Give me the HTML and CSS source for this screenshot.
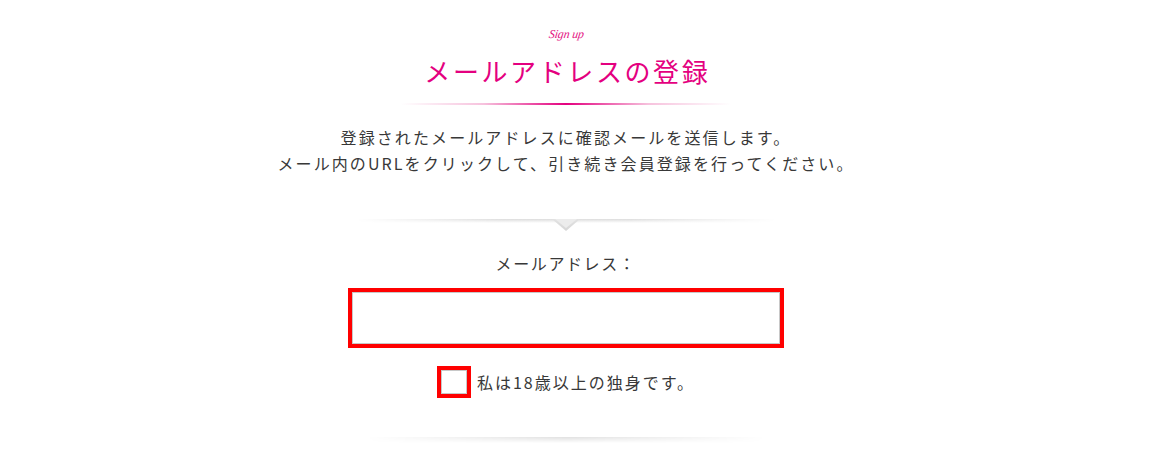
FILE: index.html
```html
<!DOCTYPE html>
<html lang="ja">
<head>
<meta charset="utf-8">
<title>メールアドレスの登録</title>
<link rel="stylesheet" href="styles.css">
</head>
<body>
<div class="page">
  <div class="signup">Sign up</div>
  <h1 class="title">メールアドレスの登録</h1>
  <div class="rule"></div>
  <p class="lead">登録されたメールアドレスに確認メールを送信します。<br>メール内のURLをクリックして、引き続き会員登録を行ってください。</p>
  <svg class="divider" width="420" height="14" viewBox="0 0 420 14">
    <defs>
      <linearGradient id="maskH" x1="0" y1="0" x2="1" y2="0">
        <stop offset="0" stop-color="#000"/>
        <stop offset="0.35" stop-color="#fff"/>
        <stop offset="0.65" stop-color="#fff"/>
        <stop offset="1" stop-color="#000"/>
      </linearGradient>
      <mask id="m">
        <rect x="0" y="0" width="420" height="14" fill="url(#maskH)"/>
      </mask>
      <linearGradient id="shadeV" x1="0" y1="0" x2="0" y2="1">
        <stop offset="0" stop-color="#dcdcdc"/>
        <stop offset="1" stop-color="#ffffff"/>
      </linearGradient>
      <linearGradient id="triV" x1="0" y1="0" x2="0" y2="1">
        <stop offset="0" stop-color="#e2e2e2"/>
        <stop offset="1" stop-color="#d6d6d6"/>
      </linearGradient>
    </defs>
    <g mask="url(#m)">
      <rect x="0" y="1" width="420" height="4" fill="url(#shadeV)"/>
    </g>
    <polygon points="196,1 224,1 210,13" fill="url(#triV)"/>
    <polygon points="199,1 221,1 210,10" fill="#ececec"/>
  </svg>
  <div class="label">メールアドレス：</div>
  <div class="field"><input class="email" type="email" aria-label="メールアドレス"></div>
  <label class="check">
    <span class="box"><span class="box-inner"></span></span>
    <span class="check-text">私は18歳以上の独身です。</span>
  </label>
  <div class="bottom-shadow"></div>
</div>
</body>
</html>
```

FILE: styles.css
```css
html, body {
  margin: 0;
  padding: 0;
  background: #fff;
}
body {
  font-family: "Noto Sans CJK JP", "Noto Sans", sans-serif;
  color: #383838;
}
.page {
  width: 1132px;
  display: flex;
  flex-direction: column;
  align-items: center;
}
.signup {
  margin-top: 27px;
  font-family: "Liberation Serif", "DejaVu Serif", serif;
  font-style: italic;
  font-size: 12px;
  line-height: 14px;
  color: #e4117f;
  letter-spacing: -0.2px;
  transform: skewX(-8deg);
}
.title {
  margin: 13px 0 0;
  font-size: 26px;
  line-height: 34px;
  font-weight: 400;
  letter-spacing: 2.6px;
  color: #e4007f;
  padding-left: 2.6px;
}
.rule {
  margin-top: 15px;
  width: 330px;
  height: 2px;
  background: linear-gradient(to right, rgba(228,0,127,0) 0%, rgba(236,120,180,0.45) 25%, #e4007f 50%, rgba(236,120,180,0.45) 75%, rgba(228,0,127,0) 100%);
}
.lead {
  margin: 19px 0 0;
  font-size: 16px;
  line-height: 26px;
  letter-spacing: 2.1px;
  text-align: center;
}
.divider {
  display: block;
  margin-top: 42px;
}
.label {
  margin-top: 19px;
  font-size: 16px;
  line-height: 24px;
  letter-spacing: 1.6px;
}
.field {
  margin-top: 13px;
  width: 436px;
  height: 60px;
  box-sizing: border-box;
  border: 4px solid #ff0000;
}
.email {
  display: block;
  width: 100%;
  height: 100%;
  box-sizing: border-box;
  margin: 0;
  border: 1px solid #c8c8c8;
  background: #fff;
  outline: none;
}
.check {
  margin-top: 18px;
  display: flex;
  align-items: center;
  gap: 6px;
  height: 32px;
}
.box {
  width: 34px;
  height: 32px;
  box-sizing: border-box;
  border: 4px solid #ff0000;
  display: flex;
}
.box-inner {
  flex: 1;
  border: 1px solid #c8c8c8;
  background: #fff;
}
.check-text {
  font-size: 16px;
  line-height: 24px;
  letter-spacing: 2px;
}
.bottom-shadow {
  margin-top: 39px;
  width: 400px;
  height: 6px;
  background: linear-gradient(to bottom, rgba(0,0,0,0.12), rgba(0,0,0,0));
  -webkit-mask-image: linear-gradient(to right, transparent 0%, #000 50%, transparent 100%);
  mask-image: linear-gradient(to right, transparent 0%, #000 50%, transparent 100%);
}
```
